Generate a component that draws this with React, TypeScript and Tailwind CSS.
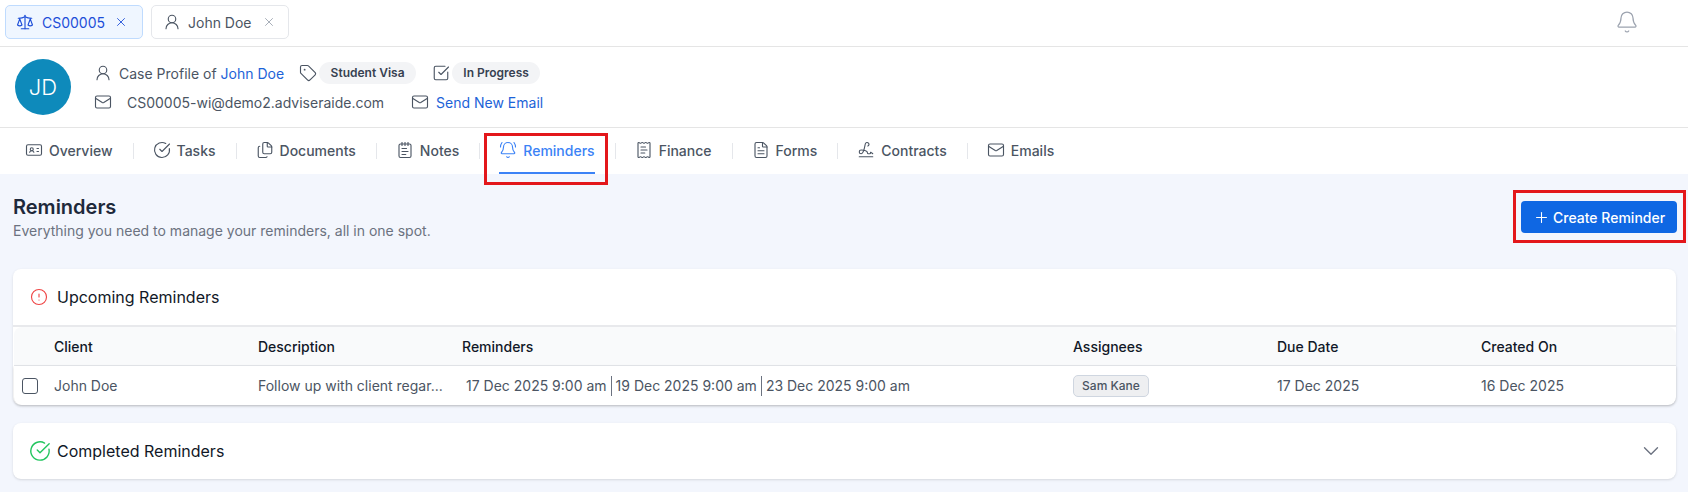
import { Bell, BellRing, ChevronDown, CircleAlert, CircleCheckBig, Files, FileText, IdCard, Mail, NotepadText, Plus, ReceiptText, Scale, Signature, SquareCheckBig, Tag, UserRound, X } from "lucide-react";

const tabs = [
  { label: "Overview", icon: IdCard },
  { label: "Tasks", icon: CircleCheckBig },
  { label: "Documents", icon: Files },
  { label: "Notes", icon: NotepadText },
  { label: "Reminders", icon: BellRing, active: true },
  { label: "Finance", icon: ReceiptText },
  { label: "Forms", icon: FileText },
  { label: "Contracts", icon: Signature },
  { label: "Emails", icon: Mail },
];

export default function App() {
  return (
    <div className="h-[492px] w-[1688px] overflow-hidden bg-[#f3f6fd] font-['Inter',sans-serif] text-[14px] text-[#4b5563]">
      {/* open tabs */}
      <div className="flex h-[47px] items-start gap-[8px] border-b border-[#e5e5e5] bg-white pl-[5px] pt-[5px] pr-[49px]">
        <div className="flex h-[34px] w-[138px] items-center rounded-[5px] border border-[#bfdbfe] bg-[#eff6ff] pl-[10px] whitespace-nowrap text-[#1d4ed8]">
          <Scale size={18} strokeWidth={1.5} />
          <span className="ml-[8px]">CS00005</span>
          <X size={14} strokeWidth={1.5} className="ml-[9px]" />
        </div>
        <div className="flex h-[34px] w-[138px] items-center rounded-[5px] border border-[#e5e7eb] bg-white pl-[11px] whitespace-nowrap">
          <UserRound size={18} strokeWidth={1.5} />
          <span className="ml-[7px]">John Doe</span>
          <X size={14} strokeWidth={1.5} className="ml-[10px] text-[#9ca3af]" />
        </div>
        <Bell size={24} strokeWidth={1.25} className="ml-auto mt-[5px] text-[#9ca3af]" />
      </div>

      {/* case header */}
      <div className="flex h-[81px] items-center border-b border-[#e5e5e5] bg-white pl-[15px]">
        <div className="flex h-[56px] w-[56px] items-center justify-center rounded-full bg-[#0e8abb] text-[22px] font-light text-white">JD</div>
        <div className="ml-[23px] flex flex-col gap-[7px] pt-[1px]">
          <div className="flex h-[22px] items-center">
            <UserRound size={18} strokeWidth={1.5} />
            <span className="ml-[7px]">Case Profile of <span className="text-[#1d63d8]">John Doe</span></span>
            <Tag size={18} strokeWidth={1.5} className="ml-[15px]" />
            <span className="ml-[2px] flex h-[22px] w-[97px] items-center justify-center rounded-full bg-[#f3f4f6] text-[12px] font-semibold text-[#374151]">Student Visa</span>
            <SquareCheckBig size={18} strokeWidth={1.5} className="ml-[16px]" />
            <span className="ml-[2px] flex h-[22px] w-[88px] items-center justify-center rounded-full bg-[#f3f4f6] text-[12px] font-semibold text-[#374151]">In Progress</span>
          </div>
          <div className="flex h-[22px] items-center">
            <Mail size={18} strokeWidth={1.5} />
            <span className="ml-[15px]">CS00005-wi@demo2.adviseraide.com</span>
            <Mail size={18} strokeWidth={1.5} className="ml-[27px]" />
            <span className="ml-[7px] text-[#1d63d8]">Send New Email</span>
          </div>
        </div>
      </div>

      {/* section nav */}
      <div className="relative flex h-[46px] items-center bg-white pl-[25px]">
        {tabs.map((t, i) => (
          <div key={t.label} className="flex h-full items-center">
            {i > 0 && <div className="mr-[19px] ml-[20px] h-[16px] w-[1px] bg-[#e5e7eb]" />}
            <div className={`flex h-full items-center gap-[6px] border-b-2 ${t.active ? "border-[#3b82f6] text-[#3b82f6]" : "border-transparent"}`}>
              <t.icon size={18} strokeWidth={1.5} />
              <span className="font-medium">{t.label}</span>
            </div>
          </div>
        ))}
        <div className="absolute left-[484px] top-[5px] h-[52px] w-[124px] border-[3px] border-[#e3171b]" />
      </div>

      {/* page */}
      <div className="relative pl-[13px] pr-[11px]">
        <div className="flex h-[95px] items-start justify-between pt-[20px]">
          <div>
            <h1 className="text-[20px] leading-[27px] font-semibold text-[#1e293b]">Reminders</h1>
            <p className="text-[14px] leading-[20px] text-[#6b7280]">Everything you need to manage your reminders, all in one spot.</p>
          </div>
          <button className="mt-[7px] flex h-[32px] w-[156px] items-center gap-[3px] rounded-[4px] bg-[#0f67e3] pl-[12px] text-[14px] font-medium text-white">
            <Plus size={17} strokeWidth={1.5} />
            Create Reminder
          </button>
        </div>
        <div className="absolute right-[2px] top-[16px] h-[53px] w-[173px] border-[3px] border-[#e3171b]" />

        <div className="mr-[1px] rounded-[8px] bg-white shadow-sm">
          <div className="flex h-[58px] items-center gap-[9px] border-b-2 border-[#e8e9ec] pl-[17px] text-[16px] text-[#111827]">
            <CircleAlert size={18} strokeWidth={1.5} className="text-[#ef4444]" />
            Upcoming Reminders
          </div>
          <div className="ml-[1px] text-[14px]">
            <div className="grid h-[39px] grid-cols-[40px_204px_204px_611px_204px_204px_1fr] items-center rounded-t-[8px] border-b border-[#e5e7eb] bg-[#f9fafb] font-medium text-[#111827]">
              <span />
              <span>Client</span>
              <span>Description</span>
              <span>Reminders</span>
              <span>Assignees</span>
              <span>Due Date</span>
              <span>Created On</span>
            </div>
            <div className="grid h-[39px] grid-cols-[40px_204px_204px_611px_204px_204px_1fr] items-center rounded-b-[8px] shadow-[0_1px_3px_rgba(0,0,0,0.15)]">
              <span className="ml-[8px] h-[16px] w-[16px] rounded-[3px] border border-[#4b5563]" />
              <span>John Doe</span>
              <span>Follow up with client regar...</span>
              <div className="flex h-[20px] items-center pl-[4px]">
                <span>17 Dec 2025 9:00 am</span>
                <span className="mx-[4px] h-[20px] w-[1px] bg-[#6b7280]" />
                <span>19 Dec 2025 9:00 am</span>
                <span className="mx-[4px] h-[20px] w-[1px] bg-[#6b7280]" />
                <span>23 Dec 2025 9:00 am</span>
              </div>
              <span className="flex h-[22px] w-[76px] items-center justify-center rounded-[5px] border border-[#cfd6e0] bg-[#eeeff1] text-[12px] font-medium text-[#4b5563]">Sam Kane</span>
              <span>17 Dec 2025</span>
              <span>16 Dec 2025</span>
            </div>
          </div>
        </div>

        <div className="mt-[18px] mr-[1px] flex h-[56px] items-center gap-[6px] rounded-[8px] bg-white pl-[16px] pr-[12px] text-[16px] text-[#111827] shadow-sm">
          <CircleCheckBig size={22} strokeWidth={1.5} className="text-[#22c55e]" />
          Completed Reminders
          <ChevronDown size={26} strokeWidth={1.25} className="ml-auto text-[#6b7280]" />
        </div>
      </div>
    </div>
  );
}
